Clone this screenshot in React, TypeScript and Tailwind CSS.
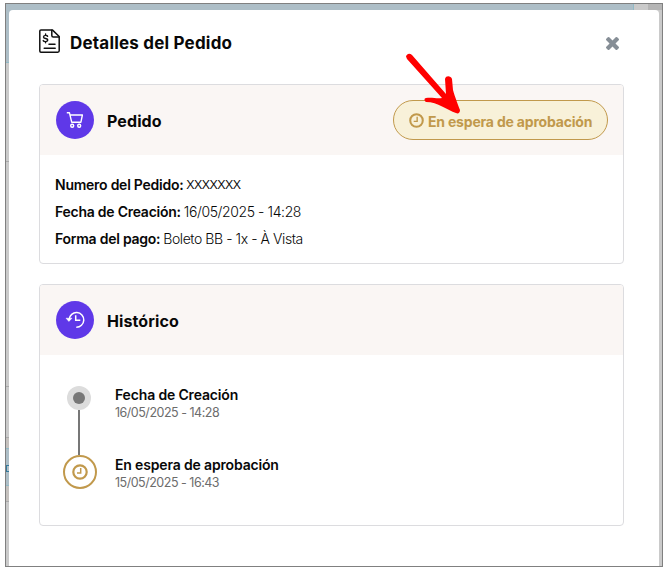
import type { ReactNode } from 'react';

function ClockIcon({ className }: { className: string }) {
  return (
    <svg viewBox="0 0 16 16" className={className} fill="none" stroke="currentColor">
      <circle cx="8" cy="8" r="6.7" strokeWidth="2.2" />
      <path d="M8.7 4v4.900H5" strokeWidth="1.5" />
    </svg>
  );
}

function InvoiceIcon() {
  return (
    <svg viewBox="0 0 21 24" className="h-6 w-[21px] shrink-0" fill="none" stroke="#111" strokeWidth="1.5" strokeLinejoin="round" strokeLinecap="round">
      <path d="M2 .9h11.3l6.9 6.6v14.3a1.4 1.4 0 0 1-1.4 1.4H2A1.2 1.2 0 0 1 .8 22V2.1A1.2 1.2 0 0 1 2 .9Z" />
      <path d="M12.8 1.2v5.2c0 1 .5 1.5 1.5 1.5h5.6M10 15.2h6M5.2 19.3h11" />
      <path d="M8.6 7.3C8.2 6 4.5 5.9 4.5 7.9c0 2.3 4.3 1 4.3 3.2 0 2-3.9 2-4.6.5M6.6 5v1.2M6.6 12.8v1" strokeWidth="1.4" />
    </svg>
  );
}

function CartIcon() {
  return (
    <svg viewBox="0 0 18 18" className="h-[18px] w-[18px]" fill="none" stroke="#fff" strokeWidth="1.4" strokeLinejoin="round">
      <path d="M.8 1.7H3.4L5.7 11.2h9.2L16.4 4H4" />
      <circle cx="6.2" cy="14.7" r="1.5" />
      <circle cx="13.2" cy="14.7" r="1.5" />
    </svg>
  );
}

function HistoryIcon() {
  return (
    <svg viewBox="0 0 20 18" className="h-[18px] w-5" fill="none" stroke="#fff" strokeWidth="1.5">
      <path d="M4.2 8.3A7.3 7.3 0 1 1 11.3 16.2" />
      <path d="M1 7.2h6L3.9 10.4Z" fill="#fff" strokeWidth=".5" />
      <path d="M10.7 4.2v5h4.6" />
    </svg>
  );
}

function Card({ icon, title, action, className, children }: { icon: ReactNode; title: ReactNode; action?: ReactNode; className: string; children: ReactNode }) {
  return (
    <section className={`overflow-hidden rounded-[4px] border border-[#dcdcdf] ${className}`}>
      <header className="flex h-[70px] items-center bg-[#faf6f4] pr-[15px] pl-4">
        <span className="flex h-[38px] w-[38px] items-center justify-center rounded-full bg-[#5f38e8]">{icon}</span>
        <h2 className="mt-[2px] ml-[13px] text-[16px] leading-6 font-bold tracking-[0.1px]">{title}</h2>
        {action}
      </header>
      {children}
    </section>
  );
}

function Detail({ label, children }: { label: string; children: ReactNode }) {
  return (
    <p className="flex gap-[3px]">
      <b className="font-semibold tracking-[-0.25px]">{label}</b>
      {children}
    </p>
  );
}

function HistoryEntry({ title, date }: { title: string; date: string }) {
  return (
    <li className="h-[70px]">
      <p className="text-[14px] leading-[18px] font-semibold tracking-[-0.16px]">{title}</p>
      <p className="text-[12.5px] leading-[17px] tracking-[-0.49px] text-[#6c6c6c]">{date}</p>
    </li>
  );
}

export default function App() {
  return (
    <div className="h-[571px] w-[667px] overflow-hidden bg-white pt-[3px] pl-[5px] font-['Inter','Liberation_Sans',sans-serif] text-[#080808]">
      <div className="relative h-[564px] w-[658px] border border-[#808080] bg-[#cacaca] pt-[6px] pl-[3px]">
        <div className="absolute top-0 left-0 h-[59px] w-[628px] border-r border-b border-[#91bac6] bg-[#adbec7]" />
        <div className="absolute top-0 right-0 h-[6px] w-[14px] bg-[#b5b5b5]" />
        <div className="absolute top-[157px] left-0 h-px w-[3px] bg-[#aaa]" />
        <div className="absolute top-[382px] left-0 h-px w-[3px] bg-[#aaa]" />
        <div className="absolute top-[433px] left-0 h-[65px] w-[3px] border-y border-[#aaa] bg-[#c5c1be]" />
        <div className="absolute top-[444px] left-0 h-[38px] w-[3px] border-y border-[#91bac6] bg-[#adbec7]" />
        <div className="absolute top-[461px] left-0 h-[7px] w-[3px] border border-r-0 border-[#347a9c]" />
        <main className="relative h-[556px] w-[650px] rounded-t-[4px] bg-white pt-[19px] pr-[35px] pl-[30px]">
          <header className="flex h-6 items-center">
            <InvoiceIcon />
            <h1 className="mt-[3px] ml-[10px] text-[17px] leading-6 font-bold tracking-[0.2px] whitespace-nowrap">Detalles del Pedido</h1>
            <button aria-label="Cerrar" className="mt-1 mr-[5px] ml-auto text-[#868e96]">
              <svg viewBox="302 366 1188 1188" className="h-[13px] w-[13px]" fill="currentColor">
                <path d="M1490 1322q0 40-28 68l-136 136q-28 28-68 28t-68-28l-294-294-294 294q-28 28-68 28t-68-28l-136-136q-28-28-28-68t28-68l294-294-294-294q-28-28-28-68t28-68l136-136q28-28 68-28t68 28l294 294 294-294q28-28 68-28t68 28l136 136q28 28 28 68t-28 68l-294 294 294 294q28 28 28 68z" />
              </svg>
            </button>
          </header>
          <Card
            icon={<CartIcon />}
            title="Pedido"
            className="mt-[31px] h-[180px]"
            action={
              <span className="ml-auto flex h-10 w-[215px] items-center rounded-full border border-[#c1994c] bg-[#f8f1d9] pl-[15px] text-[#c1994c]">
                <ClockIcon className="h-[15px] w-[15px]" />
                <span className="mt-[2px] ml-[4px] text-[14px] font-bold tracking-[-0.19px] whitespace-nowrap">En espera de aprobación</span>
              </span>
            }
          >
            <div className="pt-4 pl-[15px] text-[14px] leading-[27px] whitespace-nowrap">
              <Detail label="Numero del Pedido:"><span className="font-['Open_Sans',sans-serif] text-[13.5px] tracking-[-0.05px]">XXXXXXX</span></Detail>
              <Detail label="Fecha de Creación:"><span className="font-light tracking-[-0.4px]">16/05/2025 - 14:28</span></Detail>
              <Detail label="Forma del pago:"><span className="font-light tracking-[-0.43px]">Boleto BB - 1x - À Vista</span></Detail>
            </div>
          </Card>
          <Card icon={<HistoryIcon />} title="Histórico" className="mt-5 h-[242px]">
            <div className="flex pt-[31px] pl-[23px]">
              <div className="flex w-[34px] flex-col">
                <span className="ml-1 flex h-6 w-6 items-center justify-center rounded-full bg-[#dcdcdc]"><span className="h-3 w-3 rounded-full bg-[#777]" /></span>
                <span className="ml-[15px] h-[45px] w-[2px] bg-[#777]" />
                <span className="flex h-[34px] w-[34px] items-center justify-center rounded-full border-2 border-[#c1994c] text-[#c1994c]"><ClockIcon className="h-4 w-4" /></span>
              </div>
              <ul className="ml-[18px] whitespace-nowrap">
                <HistoryEntry title="Fecha de Creación" date="16/05/2025 - 14:28" />
                <HistoryEntry title="En espera de aprobación" date="15/05/2025 - 16:43" />
              </ul>
            </div>
          </Card>
        </main>
        <svg viewBox="400 50 66 68" className="absolute top-[46px] left-[394px] h-[68px] w-[66px]" fill="red">
          <path d="M406 56.5C407 53 410 53 412 55L446 94L445 79C446 75 451 76 452 79L453 90C455 97 458 105 460 110C460 113 458 114 456 113C447 110 438 102 426 102C424 101 424 98 426 98C432 97 437 99 442 98L407 59Z" />
        </svg>
      </div>
    </div>
  );
}
